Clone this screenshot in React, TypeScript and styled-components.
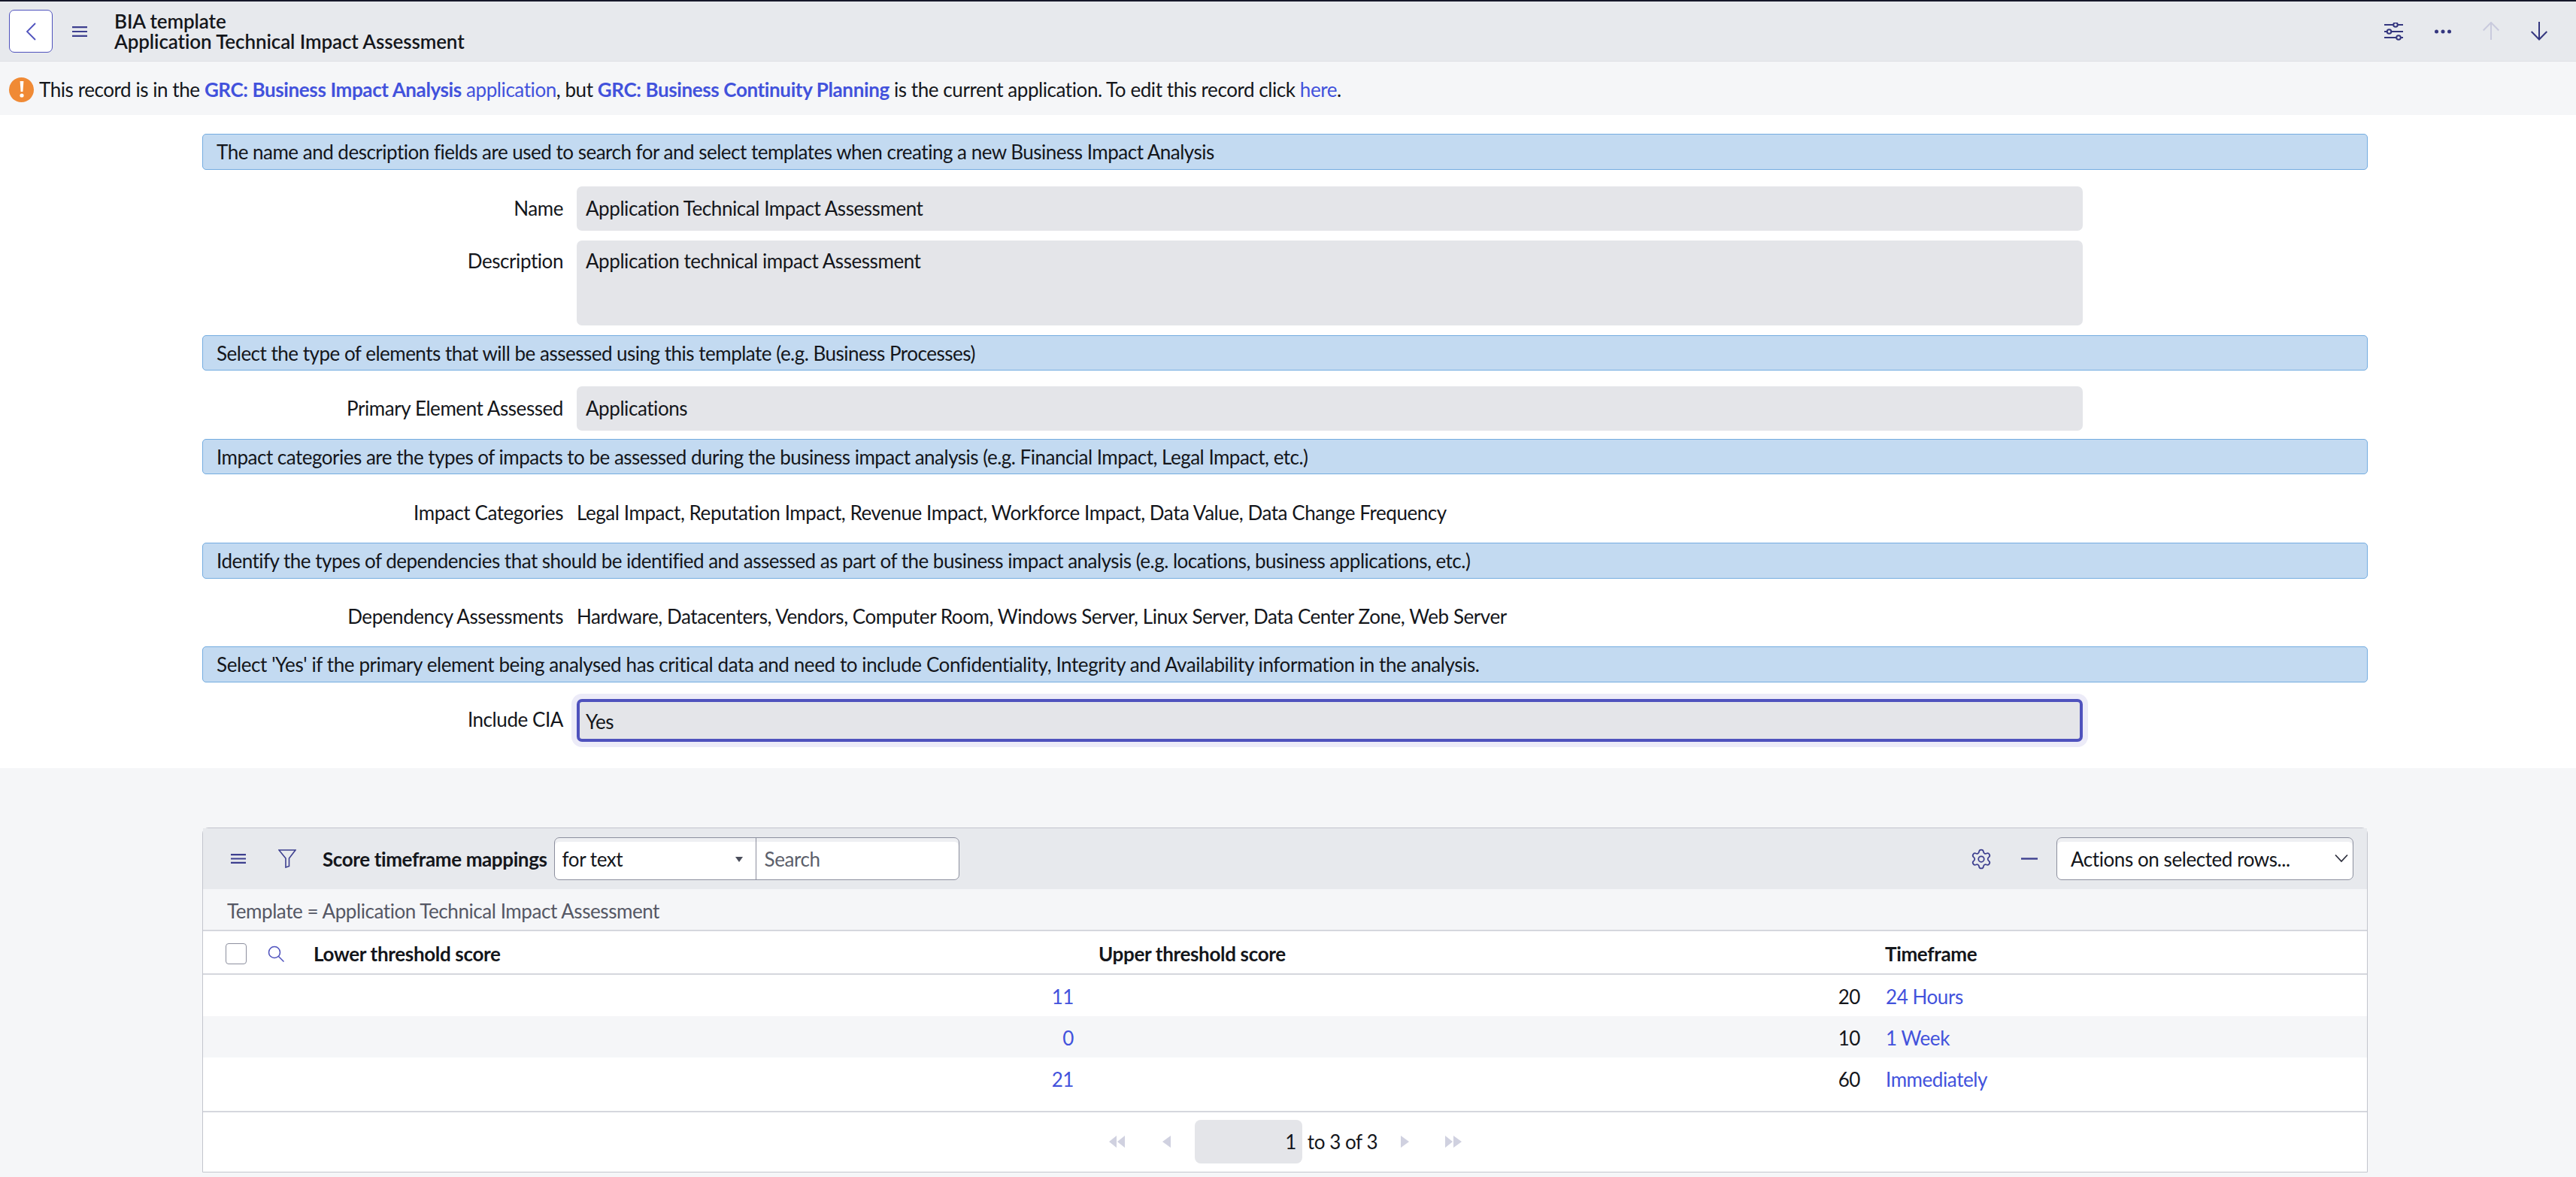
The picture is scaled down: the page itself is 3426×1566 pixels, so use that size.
import React, { FunctionComponent } from 'react';
import styled, { createGlobalStyle } from 'styled-components';
import { Settings } from 'lucide-react';

const GlobalStyle = createGlobalStyle`
  html, body {
    margin: 0;
    padding: 0;
    background: #f5f6f8;
  }
  body {
    font-family: 'Lato', 'Liberation Sans', sans-serif;
    font-size: 26px;
    letter-spacing: -0.43px;
    color: #14161b;
  }
  * {
    box-sizing: border-box;
  }
`;

const Page = styled.div`
  display: flex;
  flex-direction: column;
  width: 3426px;
  height: 1566px;
  overflow: hidden;
  border-top: 2px solid #16182a;
`;

const Header = styled.header`
  display: flex;
  align-items: center;
  height: 80px;
  padding: 0 38px 0 12px;
  background: #e7e9ed;
  border-bottom: 1px solid #dfe1e6;
`;

const BackButton = styled.button`
  display: flex;
  align-items: center;
  justify-content: center;
  width: 58px;
  height: 57px;
  padding: 0;
  background: #fff;
  border: 1.5px solid #4f52bd;
  border-radius: 7px;
`;

const MenuSlot = styled.div`
  flex: none;
  margin: 0 36px 0 26px;
`;

const TitleBlock = styled.div`
  display: flex;
  flex-direction: column;
  font-size: 26px;
  font-weight: 600;
  line-height: 27px;
  letter-spacing: -0.1px;
`;

const HeaderActions = styled.div`
  display: flex;
  align-items: center;
  gap: 42px;
  margin-left: auto;
`;

const Notice = styled.div`
  display: flex;
  align-items: center;
  height: 71px;
  padding: 3px 12px 0;
  background: #f5f6f8;
`;

const NoticeIcon = styled.span`
  display: flex;
  align-items: center;
  justify-content: center;
  width: 33px;
  height: 33px;
  margin-right: 7px;
  border-radius: 50%;
  background: #f08a35;
`;

const NoticeText = styled.div`
  white-space: pre;
`;

const Link = styled.a<{ $bold?: boolean }>`
  color: #4252dc;
  font-weight: ${(p) => (p.$bold ? 700 : 400)};
  letter-spacing: ${(p) => (p.$bold ? '-0.38px' : 'inherit')};
`;

const FormSection = styled.section`
  display: flex;
  flex-direction: column;
  height: 869px;
  padding: 25px 0 0 269px;
  background: #fff;
`;

const Annotation = styled.div<{ $top?: number; $height?: number; $tracking?: number }>`
  display: flex;
  align-items: center;
  width: 2880px;
  height: ${(p) => p.$height ?? 48}px;
  margin-top: ${(p) => p.$top ?? 0}px;
  padding: 0 18px;
  background: #c3daf1;
  border: 1.5px solid #74ace0;
  border-radius: 5px;
  letter-spacing: ${(p) => p.$tracking ?? -0.5}px;
`;

const FieldRow = styled.div<{ $top?: number; $height?: number }>`
  display: flex;
  align-items: ${(p) => (p.$height ? 'center' : 'flex-start')};
  gap: 18px;
  height: ${(p) => (p.$height ? `${p.$height}px` : 'auto')};
  margin-top: ${(p) => p.$top ?? 0}px;
  padding-top: ${(p) => (p.$height ? 10 : 0)}px;
`;

const FieldLabel = styled.label<{ $inset?: number }>`
  width: 480px;
  padding-top: ${(p) => p.$inset ?? 0}px;
  text-align: right;
  line-height: 32px;
`;

const ReadOnlyField = styled.div<{ $height?: number; $focused?: boolean; $inset?: number }>`
  width: 2003px;
  height: ${(p) => p.$height ?? 59}px;
  padding: ${(p) => p.$inset ?? 13}px ${(p) => (p.$focused ? 8 : 12)}px;
  background: #e4e5e9;
  border: ${(p) => (p.$focused ? '4px solid #4f52bd' : 'none')};
  border-radius: 7px;
  box-shadow: ${(p) => (p.$focused ? '0 0 0 7px #ecebf8' : 'none')};
  line-height: 32px;
`;

const PlainValue = styled.div`
  line-height: 32px;
`;

const ListSection = styled.section`
  display: flex;
  flex-direction: column;
  width: 2880px;
  height: 459px;
  margin: 79px 0 0 269px;
  border: 1.5px solid #c3c5cd;
  border-radius: 8px 8px 0 0;
  background: #fff;
`;

const ListToolbar = styled.div`
  display: flex;
  align-items: center;
  flex: none;
  height: 81px;
  padding: 0 18px 0 37px;
  background: #e7e9ed;
`;

const FunnelIcon = styled.svg`
  display: block;
  flex: none;
  margin-left: 43px;
`;

const ListTitle = styled.div`
  margin: 0 9px 0 35px;
  font-weight: 700;
  letter-spacing: -0.38px;
  white-space: nowrap;
`;

const SearchGroup = styled.div`
  display: flex;
  width: 539px;
  height: 57px;
  background: #fff;
  border: 1.5px solid #8c8f9e;
  border-radius: 7px;
  box-shadow: inset 0 5px 0 #eeeff2;
  overflow: hidden;
`;

const SearchField = styled.div`
  position: relative;
  display: flex;
  align-items: center;
  width: 268px;
  padding: 0 10px;
  border-right: 1.5px solid #8c8f9e;
`;

const SearchCaret = styled.span`
  position: absolute;
  right: 17px;
  top: 25px;
  width: 0;
  height: 0;
  border-left: 5px solid transparent;
  border-right: 5px solid transparent;
  border-top: 7px solid #4a4d5a;
`;

const SearchInput = styled.div`
  display: flex;
  align-items: center;
  padding: 0 11px;
  color: #5c5f6b;
`;

const ToolbarRight = styled.div`
  display: flex;
  align-items: center;
  margin-left: auto;
`;

const MinusIcon = styled.svg`
  display: block;
  margin-left: 38px;
`;

const ActionsSelect = styled.div`
  position: relative;
  display: flex;
  align-items: center;
  width: 395px;
  height: 57px;
  margin-left: 25px;
  padding: 0 18px;
  background: #fff;
  border: 1.5px solid #8c8f9e;
  border-radius: 7px;
  box-shadow: inset 0 5px 0 #eeeff2;
`;

const SelectChevron = styled.svg`
  position: absolute;
  right: 6px;
  top: 21px;
`;

const FilterBar = styled.div`
  display: flex;
  align-items: center;
  flex: none;
  height: 56px;
  padding: 3px 0 0 32px;
  background: #f5f6f8;
  border-bottom: 2px solid #d5d7dd;
  color: #555865;
`;

const TableRow = styled.div<{ $head?: boolean; $shaded?: boolean }>`
  display: grid;
  grid-template-columns: 131px 1044px 1046px 1fr;
  align-items: center;
  flex: none;
  height: ${(p) => (p.$head ? 58 : 55)}px;
  padding-top: 3px;
  background: ${(p) => (p.$shaded ? '#f5f6f8' : '#fff')};
  border-bottom: ${(p) => (p.$head ? '2px solid #d5d7dd' : 'none')};
`;

const SelectCell = styled.div`
  display: flex;
  align-items: center;
  gap: 28px;
  padding-left: 30px;
`;

const CheckBox = styled.span`
  width: 28px;
  height: 28px;
  background: #fff;
  border: 1.5px solid #8c8f9e;
  border-radius: 4px;
`;

const HeadCell = styled.div`
  padding: 0 16px;
  font-weight: 700;
  letter-spacing: -0.33px;
`;

const Cell = styled.div<{ $right?: boolean }>`
  padding: 0 17px;
  text-align: ${(p) => (p.$right ? 'right' : 'left')};
`;

const Pagination = styled.div`
  display: flex;
  align-items: center;
  justify-content: center;
  flex: none;
  height: 80px;
  margin-top: 16px;
  padding-left: 1px;
  border-top: 2px solid #d5d7dd;
`;

const PageIcon = styled.svg<{ $gap: number }>`
  display: block;
  margin-right: ${(p) => p.$gap}px;
`;

const PageInput = styled.div`
  width: 143px;
  height: 58px;
  margin-right: 7px;
  padding-right: 8px;
  background: #e4e5e9;
  border-radius: 8px;
  line-height: 58px;
  text-align: right;
`;

const PageLabel = styled.div`
  margin-right: 31px;
`;

const rows = [
  { lower: '11', upper: '20', timeframe: '24 Hours' },
  { lower: '0', upper: '10', timeframe: '1 Week' },
  { lower: '21', upper: '60', timeframe: 'Immediately' },
];

const Hamburger: FunctionComponent<{ width: number; height: number; color: string }> = ({ width, height, color }) => (
  <svg width={width} height={height} viewBox={`0 0 ${width} ${height}`} style={{ display: 'block' }}>
    <path d={`M0 1.2H${width}M0 ${height / 2}H${width}M0 ${height - 1.2}H${width}`} stroke={color} strokeWidth="2.2" fill="none" />
  </svg>
);

export default function App() {
  return (
    <Page>
      <GlobalStyle />
      <Header>
        <BackButton aria-label="Back">
          <svg width="14" height="24" viewBox="0 0 14 24" fill="none">
            <path d="M13 1 2 12l11 11" stroke="#4f52bd" strokeWidth="1.8" />
          </svg>
        </BackButton>
        <MenuSlot>
          <Hamburger width={20} height={14} color="#3d3f8f" />
        </MenuSlot>
        <TitleBlock>
          <span>BIA template</span>
          <span>Application Technical Impact Assessment</span>
        </TitleBlock>
        <HeaderActions>
          <svg width="25" height="24" viewBox="0 0 25 24" fill="none" stroke="#34367f" strokeWidth="2">
            <path d="M0 3h25M0 12h25M0 20h25" />
            <circle cx="15" cy="3" r="2.8" fill="#e7e9ed" />
            <circle cx="6.500" cy="12" r="2.8" fill="#e7e9ed" />
            <circle cx="19" cy="20" r="2.8" fill="#e7e9ed" />
          </svg>
          <svg width="22" height="8" viewBox="0 0 22 8" fill="#34367f">
            <circle cx="2.500" cy="4" r="2.500" />
            <circle cx="11" cy="4" r="2.500" />
            <circle cx="19.500" cy="4" r="2.500" />
          </svg>
          <svg width="22" height="25" viewBox="0 0 22 25" fill="none" stroke="#c9cadd" strokeWidth="2">
            <path d="M11 24V1M.7 11.500 11 1l10.300 10.500" />
          </svg>
          <svg width="22" height="25" viewBox="0 0 22 25" fill="none" stroke="#34367f" strokeWidth="2">
            <path d="M11 0v23M.7 13 11 23.500 21.300 13" />
          </svg>
        </HeaderActions>
      </Header>

      <Notice>
        <NoticeIcon>
          <svg width="6" height="22" viewBox="0 0 6 22" fill="#fff">
            <path d="M.6 0h4.8L4.4 14H1.6z" />
            <circle cx="3" cy="19" r="2.6" />
          </svg>
        </NoticeIcon>
        <NoticeText>
          This record is in the <Link $bold>GRC: Business Impact Analysis</Link> <Link>application</Link>, but{' '}
          <Link $bold>GRC: Business Continuity Planning</Link> is the current application. To edit this record click{' '}
          <Link>here</Link>.
        </NoticeText>
      </Notice>

      <FormSection>
        <Annotation>The name and description fields are used to search for and select templates when creating a new Business Impact Analysis</Annotation>
        <FieldRow $top={22}>
          <FieldLabel $inset={13}>Name</FieldLabel>
          <ReadOnlyField>Application Technical Impact Assessment</ReadOnlyField>
        </FieldRow>
        <FieldRow $top={13}>
          <FieldLabel $inset={11}>Description</FieldLabel>
          <ReadOnlyField $height={113} $inset={11}>Application technical impact Assessment</ReadOnlyField>
        </FieldRow>
        <Annotation $top={13} $height={47}>Select the type of elements that will be assessed using this template (e.g. Business Processes)</Annotation>
        <FieldRow $top={21}>
          <FieldLabel $inset={13}>Primary Element Assessed</FieldLabel>
          <ReadOnlyField>Applications</ReadOnlyField>
        </FieldRow>
        <Annotation $top={11} $height={47}>Impact categories are the types of impacts to be assessed during the business impact analysis (e.g. Financial Impact, Legal Impact, etc.)</Annotation>
        <FieldRow $height={91}>
          <FieldLabel>Impact Categories</FieldLabel>
          <PlainValue>Legal Impact, Reputation Impact, Revenue Impact, Workforce Impact, Data Value, Data Change Frequency</PlainValue>
        </FieldRow>
        <Annotation $tracking={-0.51}>Identify the types of dependencies that should be identified and assessed as part of the business impact analysis (e.g. locations, business applications, etc.)</Annotation>
        <FieldRow $height={90}>
          <FieldLabel>Dependency Assessments</FieldLabel>
          <PlainValue>Hardware, Datacenters, Vendors, Computer Room, Windows Server, Linux Server, Data Center Zone, Web Server</PlainValue>
        </FieldRow>
        <Annotation $tracking={-0.4}>Select 'Yes' if the primary element being analysed has critical data and need to include Confidentiality, Integrity and Availability information in the analysis.</Annotation>
        <FieldRow $top={22}>
          <FieldLabel $inset={11}>Include CIA</FieldLabel>
          <ReadOnlyField $height={57} $focused $inset={10}>Yes</ReadOnlyField>
        </FieldRow>
      </FormSection>

      <ListSection>
        <ListToolbar>
          <Hamburger width={20} height={13} color="#3d3f8f" />
          <FunnelIcon width="24" height="25" viewBox="0 0 24 25" fill="none" stroke="#3d3f8f" strokeWidth="1.6">
            <path d="M1 1h22l-8.500 11v10.500l-4.500 1.500V12z" />
          </FunnelIcon>
          <ListTitle>Score timeframe mappings</ListTitle>
          <SearchGroup>
            <SearchField>
              for text
              <SearchCaret />
            </SearchField>
            <SearchInput>Search</SearchInput>
          </SearchGroup>
          <ToolbarRight>
            <Settings size={30} color="#3d3f8f" strokeWidth={1.4} />
            <MinusIcon width="22" height="3" viewBox="0 0 22 3">
              <path d="M0 1.500h22" stroke="#3d3f8f" strokeWidth="2.400" />
            </MinusIcon>
            <ActionsSelect>
              Actions on selected rows...
              <SelectChevron width="18" height="12" viewBox="0 0 18 12" fill="none" stroke="#2a2c3a" strokeWidth="1.700">
                <path d="M1 1.500 9 10l8-8.500" />
              </SelectChevron>
            </ActionsSelect>
          </ToolbarRight>
        </ListToolbar>
        <FilterBar>Template = Application Technical Impact Assessment</FilterBar>
        <TableRow $head>
          <SelectCell>
            <CheckBox />
            <svg width="22" height="22" viewBox="0 0 22 22" fill="none" stroke="#4f52bd" strokeWidth="1.500">
              <circle cx="9" cy="9" r="7.500" />
              <path d="m14.500 14.500 7 7" />
            </svg>
          </SelectCell>
          <HeadCell>Lower threshold score</HeadCell>
          <HeadCell>Upper threshold score</HeadCell>
          <HeadCell>Timeframe</HeadCell>
        </TableRow>
        {rows.map((row, i) => (
          <TableRow key={row.timeframe} $shaded={i === 1}>
            <span />
            <Cell $right>
              <Link>{row.lower}</Link>
            </Cell>
            <Cell $right>{row.upper}</Cell>
            <Cell>
              <Link>{row.timeframe}</Link>
            </Cell>
          </TableRow>
        ))}
        <Pagination>
          <PageIcon $gap={49} width="22" height="16" viewBox="0 0 22 16" fill="#d0d1e0">
            <path d="M10 0v16L0 8zM21 0v16L11 8z" />
          </PageIcon>
          <PageIcon $gap={32} width="11" height="16" viewBox="0 0 11 16" fill="#d0d1e0">
            <path d="M11 0v16L0 8z" />
          </PageIcon>
          <PageInput>1</PageInput>
          <PageLabel>to 3 of 3</PageLabel>
          <PageIcon $gap={48} width="11" height="16" viewBox="0 0 11 16" fill="#d0d1e0">
            <path d="M0 0v16l11-8z" />
          </PageIcon>
          <PageIcon $gap={0} width="22" height="16" viewBox="0 0 22 16" fill="#d0d1e0">
            <path d="M0 0v16l10-8zM11 0v16l11-8z" />
          </PageIcon>
        </Pagination>
      </ListSection>
    </Page>
  );
}
